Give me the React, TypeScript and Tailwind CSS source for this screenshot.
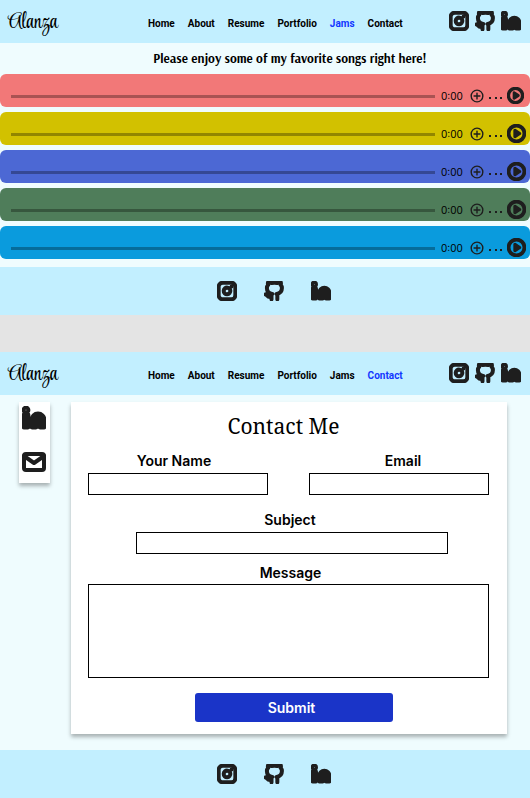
import React from "react";

type IconProps = { className: string };

const thick = {
  viewBox: "0 0 24 24",
  fill: "none",
  stroke: "#1e1e1e",
  strokeWidth: 4.8,
  strokeLinecap: "round" as const,
  strokeLinejoin: "round" as const,
  "aria-hidden": true,
};

function Instagram({ className }: IconProps) {
  return (
    <svg {...thick} className={className}>
      <rect x="2" y="2" width="20" height="20" rx="5" />
      <path d="M16 11.37A4 4 0 1 1 12.63 8 4 4 0 0 1 16 11.37zM17.5 6.5h.01" />
    </svg>
  );
}

function Github({ className }: IconProps) {
  return (
    <svg {...thick} className={className}>
      <path d="M9 19c-5 1.5-5-2.5-7-3m14 6v-3.87a3.37 3.37 0 0 0-.94-2.61c3.14-.35 6.44-1.54 6.44-7A5.44 5.44 0 0 0 20 4.77 5.07 5.07 0 0 0 19.91 1S18.73.65 16 2.48a13.38 13.38 0 0 0-7 0C6.27.65 5.09 1 5.09 1A5.07 5.07 0 0 0 5 4.77a5.44 5.44 0 0 0-1.5 3.78c0 5.42 3.3 6.61 6.44 7A3.37 3.37 0 0 0 9 18.13V22" />
    </svg>
  );
}

function Linkedin({ className }: IconProps) {
  return (
    <svg {...thick} className={className}>
      <path d="M16 8a6 6 0 0 1 6 6v7h-4v-7a2 2 0 0 0-4 0v7h-4v-7a6 6 0 0 1 6-6z" />
      <rect x="2" y="9" width="4" height="12" />
      <circle cx="4" cy="4" r="2" />
    </svg>
  );
}

function Mail({ className }: IconProps) {
  return (
    <svg {...thick} strokeWidth={4} className={className}>
      <path d="M4 4h16c1.1 0 2 .9 2 2v12c0 1.1-.9 2-2 2H4c-1.1 0-2-.9-2-2V6c0-1.1.9-2 2-2z" />
      <path d="M22 6l-10 7L2 6" />
    </svg>
  );
}

function Play({ className }: IconProps) {
  return (
    <svg {...thick} className={className}>
      <circle cx="12" cy="12" r="10" />
      <path d="M10 8l6 4-6 4z" fill="#1e1e1e" strokeWidth={4} />
    </svg>
  );
}

function PlusCircle({ className }: IconProps) {
  return (
    <svg {...thick} strokeWidth={2.4} className={className}>
      <circle cx="12" cy="12" r="10" />
      <path d="M12 7v10M7 12h10" />
    </svg>
  );
}

function SocialLinks({ className }: IconProps) {
  return (
    <div className={`flex items-center ${className}`}>
      <a href="#instagram" aria-label="Instagram"><Instagram className="block size-5" /></a>
      <a href="#github" aria-label="GitHub"><Github className="block size-5" /></a>
      <a href="#linkedin" aria-label="LinkedIn"><Linkedin className="block size-5" /></a>
    </div>
  );
}

const pages = ["Home", "About", "Resume", "Portfolio", "Jams", "Contact"];

function Header({ active }: { active: string }) {
  return (
    <header className="flex h-[43px] items-center bg-[#c2efff] pr-[9px] pb-px pl-2">
      <a href="#top" className="w-[140px] pt-1 font-['Style_Script','Liberation_Serif',cursive] text-[22px] leading-6">
        Alanza
      </a>
      <nav className="flex gap-[13px] pt-1.5 font-[Roboto,sans-serif] text-[10px] leading-3 font-bold">
        {pages.map((page) => (
          <a key={page} href={`#${page.toLowerCase()}`} className={page === active ? "text-[#1237ff]" : "text-black"}>
            {page}
          </a>
        ))}
      </nav>
      <SocialLinks className="ml-auto gap-1.5" />
    </header>
  );
}

function Footer() {
  return (
    <footer className="flex h-12 items-center justify-center bg-[#c2efff] pl-[18px]">
      <SocialLinks className="gap-[27px]" />
    </footer>
  );
}

const songs = [
  { color: "bg-[#f27878]", play: "mr-0.5 size-[17px]" },
  { color: "bg-[#d2c100]", play: "size-[19px]" },
  { color: "bg-[#4c68d4]", play: "size-[19px]" },
  { color: "bg-[#4f7d5a]", play: "size-[19px]" },
  { color: "bg-[#0a9bdd]", play: "size-[19px]" },
];

function Player({ color, play }: { color: string; play: string }) {
  return (
    <li className={`flex h-[33px] items-center rounded-md pt-3 pr-1 pl-[11px] ${color}`}>
      <div className="h-[3px] flex-1 bg-black/30" />
      <span className="mb-px ml-1.5 w-6 text-[10px] leading-3">0:00</span>
      <button aria-label="Add to playlist" className="mb-px ml-[5px]"><PlusCircle className="block size-3.5" /></button>
      <button aria-label="More options" className="ml-[5px] flex w-[13px] justify-between pt-[3px]">
        <span className="size-0.5 bg-[#1e1e1e]" />
        <span className="size-0.5 bg-[#1e1e1e]" />
        <span className="size-0.5 bg-[#1e1e1e]" />
      </button>
      <button aria-label="Play" className="mb-[3px] ml-[5px]"><Play className={`block ${play}`} /></button>
    </li>
  );
}

const field = "block w-full border border-black bg-white px-1 text-xs outline-none";
const caption = "block text-center text-sm leading-5 font-semibold";

export default function App() {
  return (
    <div className="bg-[#e4e4e4] font-[Inter,sans-serif] text-black">
      <section className="bg-[#effcfe]">
        <Header active="Jams" />
        <main>
          <h1 className="h-[31px] pl-[50px] text-center font-[Arsenal,Lato,sans-serif] text-[13px] leading-[31px] font-bold">
            Please enjoy some of my favorite songs right here!
          </h1>
          <ul className="flex flex-col gap-[5px] pb-2">
            {songs.map((song) => (
              <Player key={song.color} {...song} />
            ))}
          </ul>
        </main>
        <Footer />
      </section>

      <section className="mt-[37px] bg-[#effcfe]">
        <Header active="Contact" />
        <main className="flex items-start gap-[21px] pt-[7px] pr-[23px] pb-4 pl-[19px]">
          <aside className="flex h-[81px] w-[31px] flex-col items-center gap-5 bg-white pt-1 pr-px shadow-[0_3px_4px_rgba(0,0,0,0.3)]">
            <a href="#linkedin" aria-label="LinkedIn"><Linkedin className="block size-6" /></a>
            <a href="#mail" aria-label="Email"><Mail className="block size-6" /></a>
          </aside>
          <form
            className="flex-1 bg-white pt-3 pr-[18px] pb-3 pl-[17px] shadow-[0_3px_4px_rgba(0,0,0,0.3)]"
            onSubmit={(event) => event.preventDefault()}
          >
            <h2 className="pr-2.5 text-center font-['Noto_Serif','Liberation_Serif',serif] text-[21px] leading-6">
              Contact Me
            </h2>
            <div className="mt-[13px] grid grid-cols-2 gap-[41px]">
              <div>
                <label htmlFor="name" className={`${caption} mb-0.5 pr-2`}>Your Name</label>
                <input id="name" type="text" className={`${field} h-[22px]`} />
              </div>
              <div>
                <label htmlFor="email" className={`${caption} mb-0.5 pl-2`}>Email</label>
                <input id="email" type="email" className={`${field} h-[22px]`} />
              </div>
            </div>
            <div className="mt-[15px] pr-[41px] pl-12">
              <label htmlFor="subject" className={`${caption} mb-0.5 pr-1`}>Subject</label>
              <input id="subject" type="text" className={`${field} h-[22px]`} />
            </div>
            <div className="mt-[9px]">
              <label htmlFor="message" className={`${caption} mb-px pl-1`}>Message</label>
              <textarea id="message" className={`${field} h-[94px] resize-none`} />
            </div>
            <div className="mt-[15px] flex justify-center pl-2.5">
              <button type="submit" className="h-[29px] w-[198px] rounded-[3px] bg-[#1a34c8] pr-1 text-sm font-semibold text-white">
                Submit
              </button>
            </div>
          </form>
        </main>
        <Footer />
      </section>
    </div>
  );
}
